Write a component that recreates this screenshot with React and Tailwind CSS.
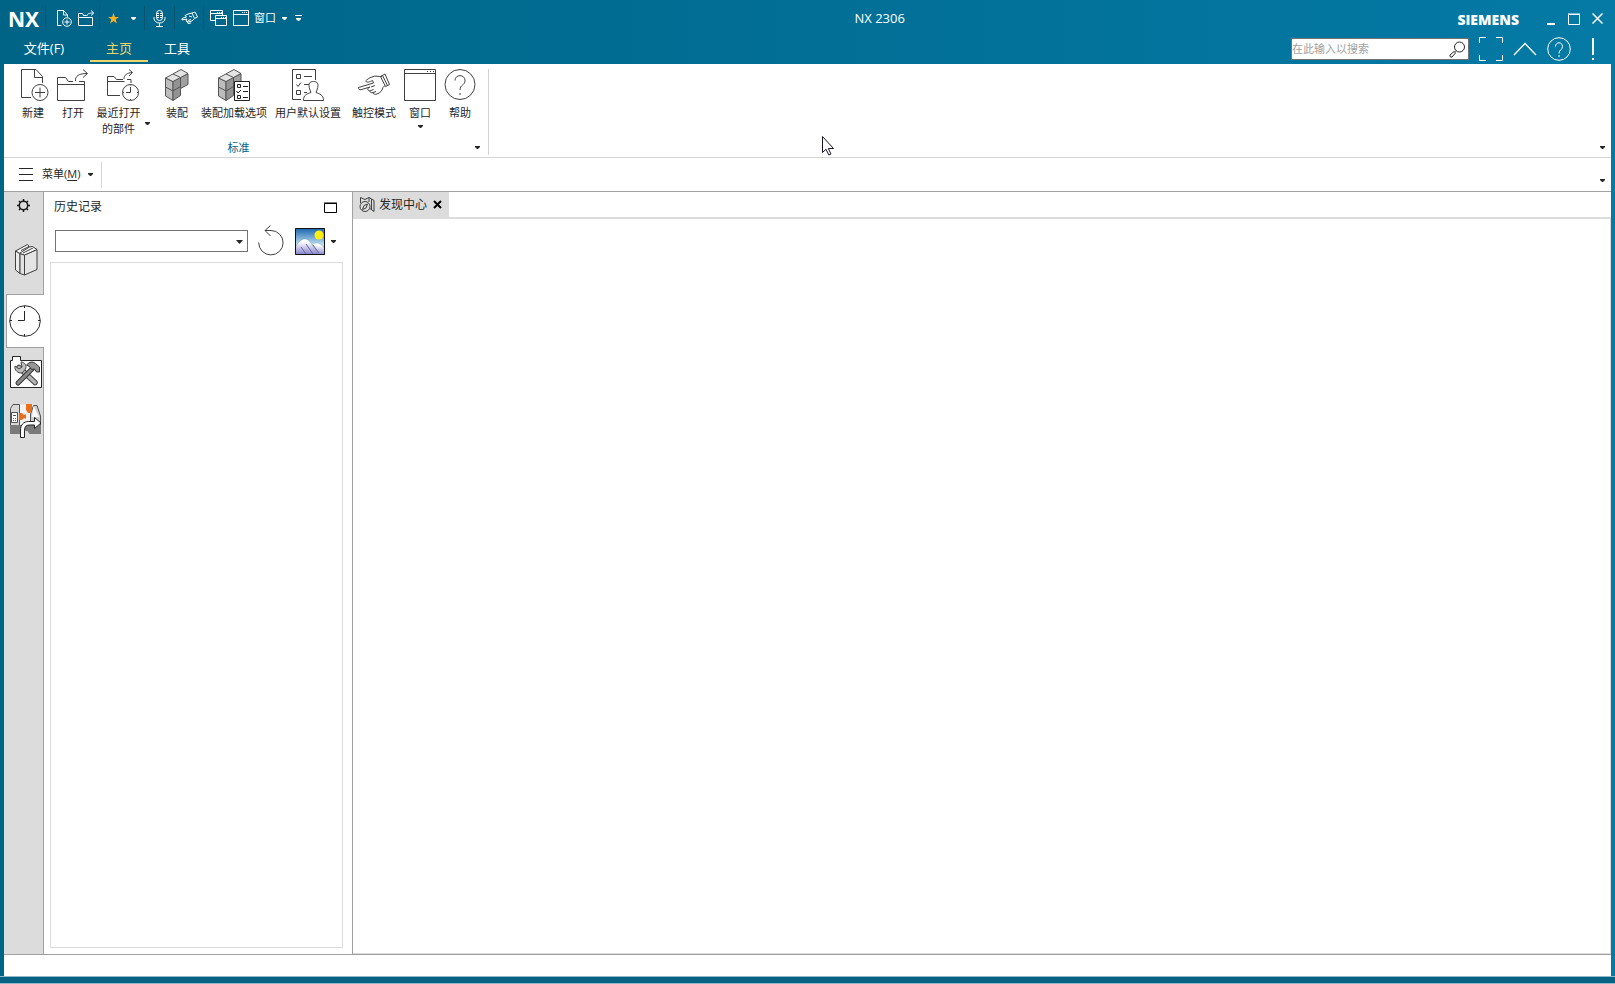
import React, { useState } from 'react';

const Caret = ({ className = '' }) => (
  <svg width="5" height="3" viewBox="0 0 5 3" className={`shrink-0 ${className}`} fill="currentColor">
    <path d="M0 0h5v1L3 3H2L0 1z" />
  </svg>
);

const Icon = ({ w, h, children, className = '' }) => (
  <svg
    width={w}
    height={h}
    viewBox={`0 0 ${w} ${h}`}
    className={`shrink-0 ${className}`}
    fill="none"
    stroke="currentColor"
    aria-hidden="true"
  >
    {children}
  </svg>
);

/* title bar icons */
const SmallNew = () => (
  <Icon w={16} h={17}>
    <path d="M5.500 15.500H1.500V.5H7.500L11.500 5V7M7.500 .5V5H11.500" />
    <circle cx="11" cy="12" r="4.300" />
    <path d="M11 9.500v5M8.500 12h5" />
  </Icon>
);

const SmallOpen = () => (
  <Icon w={17} h={17}>
    <path d="M.5 7.500h14v8H.5zM.5 7.500v-4h4l1 2h3M9 6c0-2 2-3 6-3M13 .5L15.800 3 13 5.500" />
  </Icon>
);

const Star = () => (
  <Icon w={11} h={11}>
    <path
      d="M5.500 0l1.400 3.900h4L7.700 6.300l1.200 4.200-3.400-2.500-3.400 2.500 1.200-4.200L.1 3.900h4z"
      fill="#f9b21d"
      stroke="none"
    />
  </Icon>
);

const Mic = () => (
  <Icon w={13} h={17}>
    <rect x="3.500" y=".5" width="6" height="10" rx="3" />
    <path d="M1 7v1.500a5.500 4.500 0 0 0 11 0V7M6.500 13v3M3 16.500h7M4 3.500h2M7 3.500h2M4 5.500h2M7 5.500h2M4 7.500h2M7 7.500h2" />
  </Icon>
);

const SmallHand = () => (
  <Icon w={18} h={14}>
    <path d="M11 2L7 3 4 4.500 5.500 6 1 7.500v1.500l5-1M6 8l-1 2 2 1 4-1 2-2M6 10l1 2.500 3-.5M11 2l2.500 5.500M11 2l3-1 2.500 5-3 1.500M8 5l3 1M7 9.500l3-1" />
  </Icon>
);

const Cascade = () => (
  <Icon w={17} h={17}>
    <path d="M5 10.500H.5V.5h12V5M.5 3.500h12" />
    <path d="M5.500 5.500h11v10h-11zM5.500 8.500h11" />
    <path d="M7 2.500h5M11 7.500h5" strokeDasharray="1 1" />
  </Icon>
);

const SmallWindow = () => (
  <Icon w={17} h={17}>
    <path d="M.5 .5h15v15H.5zM.5 4.500h15" />
    <path d="M9 2.500h6" strokeDasharray="1 1" />
  </Icon>
);

/* ribbon icons */
const NewIcon = () => (
  <Icon w={28} h={32} className="ml-1">
    <path d="M10 28.500H.5V.5H15L21.500 7.500V14M13.500 .5V8.500H21.500" />
    <circle cx="19" cy="23.500" r="8" />
    <path d="M19 18.500v10M14 23.500h10" />
  </Icon>
);

const OpenIcon = () => (
  <Icon w={32} h={32}>
    <path d="M.5 15.500h27v16H.5zM.5 15.500V8.500H8.500L11.500 12.500H16M27.500 15.500V12.500H22" />
    <path d="M18.500 12C18 7 22 4.500 30 4.500M26 .5l4.500 4-4.500 4" />
  </Icon>
);

const RecentIcon = () => (
  <Icon w={32} h={32}>
    <path d="M13 26.500H.5V7.500H7l2.500 3H16M.5 12.500h17M24 14v-3.500h-4" />
    <path d="M17 10c0-4 3-6 8-6.500M22 .5l3.500 3-3.500 3.500" />
    <circle cx="23.500" cy="23.500" r="8" fill="#fff" />
    <path d="M23.500 18v5.500H19M23.500 15.500v1M23.500 30v1M31 23.500h-1M17 23.500h-1" />
  </Icon>
);

const Cubes = () => (
  <g stroke="#555" strokeLinejoin="round">
    <path d="M.5 9L8 12.500V31.500L.5 27z" fill="#bdbdbd" />
    <path d="M8 12.500L15.500 8V26.500L8 31.500z" fill="#939393" />
    <path d="M15.500 8L23 5V15.500L15.500 19.500z" fill="#a0a0a0" />
    <path d="M.5 9L16 .5 23 4.500 8 12.500z" fill="#e4e4e4" />
    <path d="M.5 18L8 22 15.500 17.500M8 5l7.500 3.500" />
  </g>
);

const AssemblyIcon = () => (
  <Icon w={24} h={32}>
    <Cubes />
  </Icon>
);

const AssemblyOptionsIcon = () => (
  <Icon w={33} h={32}>
    <Cubes />
    <path d="M16.500 12.500h15v19h-15z" fill="#fff" stroke="#222" />
    <path d="M19.500 15.500h3v3h-3zM19.500 26.500h3v3h-3zM25 17.500h5M25 22.500h5M25 28.500h5M18.500 22l1.500 2 3-3" stroke="#222" />
  </Icon>
);

const UserDefaultsIcon = () => (
  <Icon w={32} h={32}>
    <path d="M9 30.500H.5V.5h23V11" />
    <path d="M4.500 5.500h4v4h-4zM4.500 21.500h4v4h-4zM12 7.500h8M12 15.500h5M12 23.500h3M4.500 15.500l1.500 2 3-4" />
    <path d="M18 21c-2.500-7 0-8.500 3.500-8.500s6 1.500 3.500 8.500M18 21l1 2.500c-4 1.500-7.500 2-7.500 8h20c0-6-4-6.500-7.500-8L25 21" />
  </Icon>
);

const HandIcon = () => (
  <Icon w={32} h={32}>
    <path d="M24 7.500c-4 .5-6-1.500-10 .5-3 1-5 2.500-6.500 4 1.500 2 4 1 7-.5l1 2.500L.5 18.500c-.5 2 1 2.500 2.500 2.200L12 18" />
    <path d="M12 18c-2 1-3 2-1.500 3.500 1 .5 3 0 5-1M12 21.500c-.5 2 1 2.500 3 2l3-1M15 23.500c0 2 2 2 4 1.500 3-1 5-3 6-6.500l2-2M13 18l4-1.500" />
    <path d="M22.500 7.500l5 10 4-2-4.500-10.500zM24.500 6.500l5 10" />
  </Icon>
);

const WindowIcon = () => (
  <Icon w={32} h={32}>
    <path d="M.5 .5h31v31H.5zM.5 4.500h31" />
    <path d="M23 2.500h8" strokeDasharray="1 2" />
  </Icon>
);

const HelpIcon = () => (
  <Icon w={32} h={32}>
    <circle cx="16" cy="15.500" r="15" />
    <path d="M11 11.500c0-6.500 10-6.500 10 0 0 5-5 4-5 9.500M16 24v2" />
  </Icon>
);

/* resource bar icons */
const GearIcon = () => (
  <Icon w={13} h={13} className="text-neutral-900">
    <circle cx="6.500" cy="6.500" r="4.200" strokeWidth="1.500" />
    <path d="M6.500 0v2M6.500 11v2M0 6.500h2M11 6.500h2M2 2l1.500 1.500M9.500 9.500L11 11M11 2L9.500 3.500M2 11l1.500-1.500" strokeWidth="1.500" />
  </Icon>
);

const BooksIcon = () => (
  <Icon w={23} h={32} className="text-neutral-700">
    <g strokeLinejoin="round">
      <path d="M.5 7L5 9.500V29.500L.5 26z" fill="#ececec" />
      <path d="M5 9.500L9.500 11V31L5 29.500z" fill="#e2e2e2" />
      <path d="M9.500 11L22 5.500V25.500L9.500 31z" fill="#e4e4e4" />
      <path d="M.5 7L12.500 .5l2 2.500 3-.5 4.500 3L9.500 11 5 9.500z" fill="#f7f7f7" />
      <path d="M5 9l9.500-6M6 6.500l8-4M8 9l10-5" />
    </g>
  </Icon>
);

const ClockIcon = () => (
  <Icon w={32} h={32} className="text-neutral-800">
    <circle cx="16" cy="16" r="15.300" />
    <path d="M15.500 6v9.500H9M15.500 1v2M15.500 29v2M1 15.500h2M29 15.500h2" />
  </Icon>
);

const ToolsIcon = () => (
  <Icon w={32} h={32} className="text-neutral-800">
    <path d="M.5 31.500V4.500h2v-4h8v4h21v27z" fill="#fff" />
    <path d="M9 11.500L25 26.500" stroke="#444" strokeWidth="5.500" strokeLinecap="round" />
    <path d="M9 11.500L25 26.500" stroke="#b5b5b5" strokeWidth="3.500" strokeLinecap="round" />
    <path d="M5 10l4 3 3-2-1-5c4 0 6 4 4.500 7l-3.500 4c-4 .5-8-3-7-7z" fill="#c0c0c0" stroke="#444" />
    <path d="M24 11L8 27" stroke="#333" strokeWidth="5" strokeLinecap="round" />
    <path d="M24 11L8 27" stroke="#8a8a8a" strokeWidth="3" strokeLinecap="round" />
    <path d="M16.500 9c3-3 6-4 9-1.500l4 3.500v5h-3l-2-3-3 .5-2-3z" fill="#969696" stroke="#333" />
  </Icon>
);

const MachineIcon = () => (
  <Icon w={33} h={34} className="text-neutral-600">
    <path d="M10.500 .5H24v21H10.500z" fill="#f2f2f2" stroke="none" />
    <path d="M1.500 21.500V4.500L4 .5h6.500v21z" fill="#d9d9d9" />
    <path d="M31.500 21.500V12L28 1.500h-3.500L21.500 10v11.500z" fill="#cfcfcf" />
    <path d="M24.500 2L30 13h-7z" fill="#fafafa" stroke="none" />
    <path d="M1 21h31v9H20.500l-2-3h-5l-2 3H1z" fill="#7b7b7b" stroke="none" />
    <path d="M2.500 8.500h6v10h-6z" fill="#fff" />
    <path d="M4 11.500h3M4 14.500h1M6 14.500h1M4 16.500h1M6 16.500h1" />
    <path d="M10 9h3l2 2 2-1v5l-2-1-2 2h-3zM17 0h6v6l-2 3h-2l-2-3z" fill="#e8701a" stroke="none" />
    <path
      d="M11.500 33.500V26c0-5 3-8.500 8-8.500h6v-4l6.500 5.500-6.500 5.500v-3.500h-5c-3.500 0-5 2-5 5.500v7z"
      fill="#fff"
      stroke="#222"
    />
  </Icon>
);

const DiscoverIcon = () => (
  <Icon w={17} h={17} className="text-neutral-700">
    <path d="M1.500 7V1.500l4.500 2 4-2 5 3v11l-4-3M10 1.500V6M12.500 3v11" />
    <circle cx="6" cy="10.500" r="5" />
    <path d="M8.500 8l-1.500 4-3.500 1.500L5 9.500z" />
  </Icon>
);

const ResetIcon = () => (
  <Icon w={26} h={31} className="text-neutral-700">
    <path d="M.7 17.500A12.200 12.200 0 1 0 13 5.500H7M12.500 .5L7 5.500l5.500 5.500" />
  </Icon>
);

const PictureIcon = () => (
  <Icon w={30} h={27}>
    <defs>
      <linearGradient id="sky" x1="0" y1="0" x2="0" y2="1">
        <stop offset="0" stopColor="#1b66ae" />
        <stop offset="0.600" stopColor="#b9dcf0" />
      </linearGradient>
      <linearGradient id="hill" x1="0" y1="0" x2="0" y2="1">
        <stop offset="0.200" stopColor="#fff" />
        <stop offset="1" stopColor="#8582c9" />
      </linearGradient>
    </defs>
    <path d="M.5 .5h29v26H.5z" fill="url(#sky)" stroke="none" />
    <circle cx="24" cy="7" r="4.500" fill="#ffee10" stroke="none" />
    <path d="M16 18c3-4 8-5 13.500 2v7H16z" fill="url(#hill)" stroke="#69a" strokeWidth=".5" />
    <path d="M.5 19C6 9 12 9 16 15l8 11.500H.5z" fill="url(#hill)" stroke="#69a" strokeWidth=".5" />
    <path d="M6 19l5 7M11 16l7 10M18 17l6 8" stroke="#6b67a8" />
    <path d="M.5 .5h29v26H.5z" stroke="#111" />
  </Icon>
);

const ribbonItems = [
  { label: '新建', icon: NewIcon, width: 'w-10' },
  { label: '打开', icon: OpenIcon, width: 'w-10' },
  { label: '最近打开', second: '的部件', icon: RecentIcon, width: 'w-15' },
  { label: '装配', icon: AssemblyIcon, width: 'w-12' },
  { label: '装配加载选项', icon: AssemblyOptionsIcon, width: 'w-[66px]' },
  { label: '用户默认设置', icon: UserDefaultsIcon, width: 'w-[82px]' },
  { label: '触控模式', icon: HandIcon, width: 'w-[50px]' },
  { label: '窗口', icon: WindowIcon, width: 'w-[42px]', menu: true },
  { label: '帮助', icon: HelpIcon, width: 'w-[38px]' },
];

const Divider = ({ className = '' }) => <span className={`h-6 w-px bg-[#0a5472] ${className}`} />;

const TitleBar = () => (
  <div className="flex h-9 items-center">
    <span className="w-[45px] pt-0.5 pl-2 font-['Noto_Sans'] text-[21px] leading-9 font-bold">NX</span>
    <Divider />
    <button aria-label="新建" className="ml-2.5"><SmallNew /></button>
    <button aria-label="打开" className="ml-1.5"><SmallOpen /></button>
    <Divider className="ml-1" />
    <button aria-label="收藏" className="ml-2"><Star /></button>
    <button aria-label="收藏选项" className="ml-3"><Caret /></button>
    <Divider className="ml-2" />
    <button aria-label="语音" className="ml-2"><Mic /></button>
    <Divider className="ml-2" />
    <button aria-label="触控模式" className="ml-1.5"><SmallHand /></button>
    <Divider className="ml-1" />
    <button aria-label="层叠窗口" className="ml-1.5"><Cascade /></button>
    <button className="ml-1.5 flex items-center text-[11px]">
      <SmallWindow />
      <span className="ml-1">窗口</span>
      <Caret className="ml-1.5" />
    </button>
    <button aria-label="自定义" className="ml-2">
      <Icon w={7} h={6}>
        <path d="M0 .5h7" />
        <path d="M1 3h5v1L4 6H3L1 4z" fill="currentColor" stroke="none" />
      </Icon>
    </button>
    <h1 className="flex-1 pt-0.5 text-center font-['Open_Sans'] text-[13px]">NX 2306</h1>
    <span className="pt-1 font-['Open_Sans'] text-sm font-extrabold">SIEMENS</span>
    <div className="mr-3 ml-7 flex items-center gap-3">
      <button aria-label="最小化" className="pt-1">
        <Icon w={9} h={12}><path d="M0 10h8" strokeWidth="2" /></Icon>
      </button>
      <button aria-label="最大化" className="pt-0.5">
        <Icon w={12} h={12}><path d="M.5 1.500h11v10H.5zM0 1h12" /></Icon>
      </button>
      <button aria-label="关闭">
        <Icon w={11} h={11}><path d="M.5 .5l10 10M10.500 .5l-10 10" strokeWidth="1.500" /></Icon>
      </button>
    </div>
  </div>
);

const TabRow = ({ active, onSelect }) => (
  <nav className="flex h-7 items-start text-[13px]">
    <button className="h-[26px] w-[90px] pr-0.5">文件(F)</button>
    {['主页', '工具'].map((name) => (
      <button
        key={name}
        onClick={() => onSelect(name)}
        className={`h-[26px] w-[58px] border-b-2 pt-0.5 ${
          active === name ? 'border-[#ecd46a] text-[#ecd46a]' : 'border-transparent'
        }`}
      >
        {name}
      </button>
    ))}
    <div className="mt-px mr-5 ml-auto flex items-center">
      <div className="mr-2.5 flex h-[22px] w-[178px] items-center border border-neutral-500 bg-white">
        <input
          aria-label="搜索"
          placeholder="在此输入以搜索"
          className="min-w-0 flex-1 text-[11px] text-neutral-800 outline-none placeholder:text-neutral-400"
        />
        <button aria-label="开始搜索" className="mr-0.5 text-neutral-800">
          <Icon w={17} h={17}>
            <circle cx="10.500" cy="6" r="5" />
            <path d="M7 9.500L5.500 11M5 10.500l1.500 1.500-3.500 4c-1.500.5-2.500-.5-2-2z" />
          </Icon>
        </button>
      </div>
      <div className="flex items-center gap-2.5">
        <button aria-label="全屏">
          <Icon w={24} h={24}>
            <path d="M.5 6V.5H7M17 .5h6.500V6M.5 18v5.500H7M17 23.500h6.500V18" />
          </Icon>
        </button>
        <button aria-label="折叠功能区">
          <Icon w={24} h={14}><path d="M1 13L12 1.500 23 13" strokeWidth="1.300" /></Icon>
        </button>
        <button aria-label="帮助">
          <Icon w={24} h={24}>
            <circle cx="12" cy="12" r="11.300" />
            <path d="M8.500 9.500c0-5 7-5 7 0 0 3.500-3.500 3-3.500 7M12 18v2" />
          </Icon>
        </button>
        <button aria-label="提示" className="ml-2.5">
          <Icon w={4} h={22}><path d="M2 0v17M2 20v2" strokeWidth="2" /></Icon>
        </button>
      </div>
    </div>
  </nav>
);

const Ribbon = () => (
  <section className="relative flex border-b border-neutral-300 bg-white pt-[5px] text-neutral-800">
    <div className="mb-0.5 flex w-[485px] flex-col border-r border-neutral-300">
      <div className="ml-[9px] flex h-[70px] items-start text-[11px] leading-4">
        {ribbonItems.map(({ label, second, icon: Graphic, width, menu }) => (
          <button key={label} className={`flex shrink-0 flex-col items-center ${width}`}>
            <span className="mb-1 text-neutral-700"><Graphic /></span>
            {second ? (
              <span className="flex items-center gap-1">
                <span className="whitespace-nowrap">
                  {label}
                  <br />
                  {second}
                </span>
                <Caret className="mt-1" />
              </span>
            ) : (
              <span className="whitespace-nowrap">{label}</span>
            )}
            {menu && <Caret className="mt-1" />}
          </button>
        ))}
      </div>
      <div className="flex h-4 items-center pr-2 pl-2">
        <span className="flex-1 pt-0.5 pr-2.5 text-center text-[11px] leading-4 text-[#00658a]">标准</span>
        <button aria-label="标准组选项"><Caret /></button>
      </div>
    </div>
    <button aria-label="功能区选项" className="mr-1.5 mb-2 ml-auto self-end"><Caret /></button>
    <svg width="13" height="21" viewBox="0 0 13 21" className="absolute top-[72px] left-[818px]">
      <path d="M.5 .5v16l3.500-3.300 2.800 5.800 2.200-1-2.700-5.500h5.200z" fill="#fff" stroke="#1a1423" />
    </svg>
  </section>
);

const MenuBar = () => (
  <div className="flex h-[34px] items-center border-b border-neutral-400 bg-white text-neutral-800">
    <button className="flex h-[26px] items-center border-r border-neutral-300 pr-2 pl-[15px] text-[11px]">
      <Icon w={14} h={13}><path d="M0 .5h14M0 6.500h14M0 12.500h14" /></Icon>
      <span className="ml-[9px]">菜单(<u className="underline-offset-2">M</u>)</span>
      <Caret className="ml-2" />
    </button>
    <button aria-label="菜单栏选项" className="mt-3 mr-1.5 ml-auto"><Caret /></button>
  </div>
);

const ResourceBar = () => (
  <aside className="flex w-10 shrink-0 flex-col bg-[#dcdcdc]">
    <div className="flex h-[102px] flex-col items-center border-r border-neutral-400 pt-[7px] pr-px">
      <button aria-label="资源条选项"><GearIcon /></button>
      <button aria-label="重用库" className="mt-8 ml-1.5"><BooksIcon /></button>
    </div>
    <button
      aria-label="历史记录"
      className="ml-0.5 flex h-[54px] items-center justify-center border-y border-l border-neutral-400 bg-white pr-0.5"
    >
      <ClockIcon />
    </button>
    <div className="flex flex-1 flex-col items-center border-r border-neutral-400 pt-2 pl-1">
      <button aria-label="加工向导"><ToolsIcon /></button>
      <button aria-label="机床" className="mt-4"><MachineIcon /></button>
    </div>
  </aside>
);

const HistoryPanel = () => (
  <section className="flex w-[309px] shrink-0 flex-col border-r border-neutral-400 bg-white pt-1.5 pr-[9px] pb-1.5 pl-1.5 text-neutral-800">
    <div className="flex h-[18px] items-center justify-between pr-1.5 pl-1 text-xs">
      <h2>历史记录</h2>
      <button aria-label="最大化面板" className="text-black">
        <Icon w={13} h={11}><path d="M.5 1.500h12v9H.5zM0 1h13" /></Icon>
      </button>
    </div>
    <div className="flex h-[46px] items-center pt-1 pl-[5px]">
      <div className="relative w-[193px]">
        <select
          aria-label="历史记录筛选"
          className="block h-[22px] w-full appearance-none border border-neutral-500 bg-white"
        />
        <svg
          width="7"
          height="4"
          viewBox="0 0 7 4"
          fill="currentColor"
          className="pointer-events-none absolute top-[10px] right-[5px]"
        >
          <path d="M0 0h7L3.500 4z" />
        </svg>
      </div>
      <button aria-label="刷新" className="ml-2.5 pb-0.5"><ResetIcon /></button>
      <button aria-label="显示图像" className="ml-[11px] flex items-center gap-1.5">
        <PictureIcon />
        <Caret />
      </button>
    </div>
    <div className="flex-1 border border-[#dcdcdc]" />
  </section>
);

const Workspace = () => (
  <main className="flex min-w-0 flex-1 flex-col bg-white">
    <div className="flex h-[27px] border-b-2 border-[#dcdcdc]">
      <div className="flex w-24 items-center bg-[#dcdcdc] pl-1.5 text-xs text-neutral-800">
        <DiscoverIcon />
        <span className="ml-[3px]">发现中心</span>
        <button aria-label="关闭标签" className="ml-1.5 text-black">
          <Icon w={9} h={9}><path d="M1 1l7 7M8 1L1 8" strokeWidth="2" /></Icon>
        </button>
      </div>
    </div>
    <div className="flex-1 border-r border-b border-[#dcdcdc]" />
  </main>
);

const App = () => {
  const [tab, setTab] = useState('主页');

  return (
    <div className="flex min-h-screen flex-col bg-linear-to-r from-[#006487] to-[#047aa5] font-['Open_Sans','Noto_Sans_CJK_SC',sans-serif]">
      <header className="text-white">
        <TitleBar />
        <TabRow active={tab} onSelect={setTab} />
      </header>
      <div className="mx-1 flex flex-1 flex-col">
        <Ribbon />
        <MenuBar />
        <div className="flex flex-1 border-b border-neutral-400">
          <ResourceBar />
          <HistoryPanel />
          <Workspace />
        </div>
        <div className="h-[21px] bg-white" />
      </div>
      <footer className="h-2 border-y border-[#8fb8c9] bg-[#066183]" />
    </div>
  );
};

export default App;
